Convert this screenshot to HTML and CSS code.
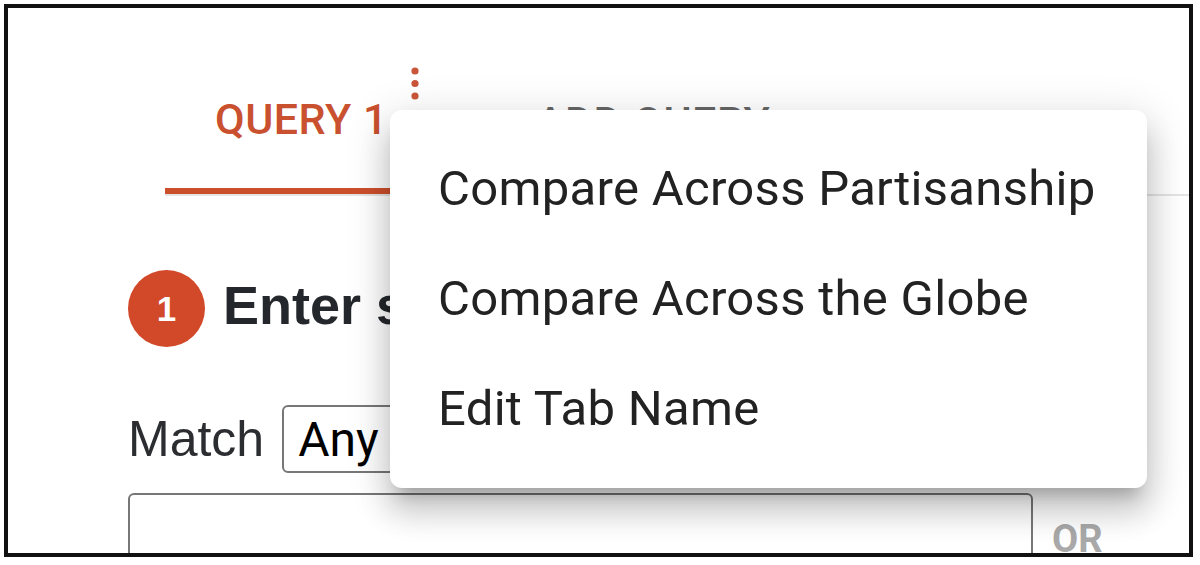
FILE: index.html
```html
<!DOCTYPE html>
<html lang="en">
<head>
<meta charset="utf-8">
<title>Query</title>
<link rel="stylesheet" href="styles.css">
</head>
<body>
<div class="frame">
  <div class="tabs">
    <div class="tab tab-active">QUERY 1
      <svg class="kebab" width="10" height="36" viewBox="0 0 10 36"><circle cx="5" cy="5" r="3.6"/><circle cx="5" cy="17.5" r="3.6"/><circle cx="5" cy="30" r="3.6"/></svg>
    </div>
    <div class="tab tab-add">ADD QUERY</div>
  </div>
  <div class="content">
    <div class="step">
      <span class="step-num">1</span>
      <h2 class="step-title">Enter search terms</h2>
    </div>
    <div class="match-row">
      <span class="match-label">Match</span>
      <div class="select">Any</div>
    </div>
    <div class="query-row">
      <div class="query-input"></div>
      <span class="or">OR</span>
    </div>
  </div>
  <ul class="menu">
    <li class="menu-item">Compare Across Partisanship</li>
    <li class="menu-item">Compare Across the Globe</li>
    <li class="menu-item">Edit Tab Name</li>
  </ul>
</div>
</body>
</html>
```
FILE: styles.css
```css
* { box-sizing: border-box; }
html, body { margin: 0; padding: 0; background: #fff; }
body { font-family: Roboto, "Liberation Sans", sans-serif; }

.frame {
  position: relative;
  margin: 4px;
  width: 1189px;
  height: 553px;
  border: 4px solid #111;
  overflow: hidden;
  background: #fff;
}

.tabs {
  display: flex;
  margin: 42px 0 0 157px;
  border-bottom: 2px solid #e4e4e4;
}
.tab {
  position: relative;
  height: 144px;
  display: flex;
  align-items: center;
  font-family: Roboto, sans-serif;
  font-weight: 500;
  font-size: 43px;
  letter-spacing: 0.5px;
}
.tab-active {
  padding: 0 50px;
  color: #c9512f;
  border-bottom: 6px solid #cc4f2c;
}
.tab-add {
  padding: 0 50px 0 98px;
  color: #666;
}
.kebab {
  position: absolute;
  left: 245px;
  top: 16px;
  fill: #c9553a;
}

.content {
  padding: 74px 0 0 120px;
}
.step {
  display: flex;
  align-items: center;
  gap: 18px;
}
.step-num {
  width: 77px;
  height: 77px;
  border-radius: 50%;
  background: #d2492a;
  color: #fff;
  font-family: "Liberation Sans", Arial, sans-serif;
  font-weight: bold;
  font-size: 35px;
  display: flex;
  align-items: center;
  justify-content: center;
}
.step-title {
  margin: 0 0 8px;
  font-family: "Liberation Sans", Arial, sans-serif;
  font-weight: bold;
  font-size: 54px;
  line-height: 1;
  color: #24272b;
  white-space: nowrap;
}

.match-row {
  display: flex;
  align-items: center;
  gap: 18px;
  margin-top: 58px;
}
.match-label {
  font-family: "Liberation Sans", Arial, sans-serif;
  font-size: 50px;
  color: #2b2d31;
}
.select {
  width: 260px;
  height: 68px;
  border: 2px solid #777;
  border-radius: 6px;
  padding-left: 14px;
  display: flex;
  align-items: center;
  font-family: Roboto, sans-serif;
  font-size: 48px;
  color: #000;
}

.query-row {
  display: flex;
  align-items: flex-start;
  gap: 19px;
  margin-top: 20px;
}
.query-input {
  width: 905px;
  height: 120px;
  border: 2px solid #777;
  border-radius: 6px;
}
.or {
  margin-top: 27px;
  font-family: Roboto, sans-serif;
  font-weight: bold;
  font-size: 38px;
  line-height: 1;
  color: #a9a9a9;
}

.menu {
  position: absolute;
  left: 382px;
  top: 102px;
  width: 757px;
  margin: 0;
  padding: 24px 0;
  list-style: none;
  background: #fff;
  border-radius: 12px;
  box-shadow: 0 15px 15px -9px rgba(0,0,0,0.2), 0 24px 30px 3px rgba(0,0,0,0.14), 0 9px 42px 6px rgba(0,0,0,0.12);
}
.menu-item {
  padding: 18px 48px;
  font-family: Roboto, sans-serif;
  font-size: 49px;
  letter-spacing: 0.3px;
  line-height: 74px;
  color: #222;
  white-space: nowrap;
}
```
